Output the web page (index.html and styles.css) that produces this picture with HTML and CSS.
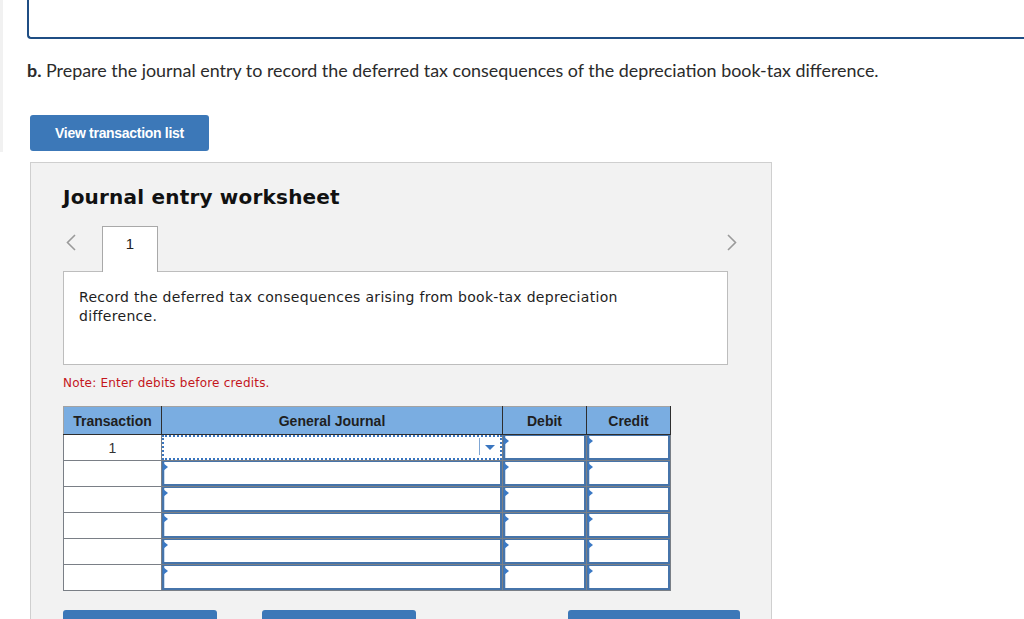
FILE: index.html
```html
<!doctype html>

<html lang="en">

<head>
  <meta charset="utf-8">
  <title>Journal entry worksheet</title>
  <link rel="stylesheet" href="styles.css">
</head>

<body>

  <div class="page-top">
    <div class="prev-part"></div>

    <p class="question"><b>b.</b> Prepare the journal entry to record the deferred tax consequences of the depreciation book-tax difference.</p>

    <button class="btn btn-list">View transaction list</button>
  </div>

  <section class="worksheet">
    <h2 class="ws-title">Journal entry worksheet</h2>

    <div class="tabs">
      <span class="nav">
        <svg width="10" height="17" viewBox="0 0 10 17"><polyline points="9,1 1.5,8.5 9,16" fill="none" stroke="#9a9a9a" stroke-width="1.6"/></svg>
      </span>
      <div class="tab">1</div>
      <span class="spacer"></span>
      <span class="nav nav-next">
        <svg width="10" height="17" viewBox="0 0 10 17"><polyline points="1,1 8.5,8.5 1,16" fill="none" stroke="#9a9a9a" stroke-width="1.6"/></svg>
      </span>
    </div>

    <div class="entry-box">
      <p>Record the deferred tax consequences arising from book-tax depreciation difference.</p>
    </div>

    <p class="note">Note: Enter debits before credits.</p>

    <table class="journal">
      <thead>
        <tr>
          <th class="col-tr">Transaction</th>
          <th class="col-gj">General Journal</th>
          <th class="col-amt">Debit</th>
          <th class="col-amt">Credit</th>
        </tr>
      </thead>
      <tbody>
        <tr>
          <td class="tr-num">1</td>
          <td><div class="field field-select"><span class="caret"></span></div></td>
          <td><div class="field"></div></td>
          <td><div class="field"></div></td>
        </tr>
        <tr>
          <td></td>
          <td><div class="field"></div></td>
          <td><div class="field"></div></td>
          <td><div class="field"></div></td>
        </tr>
        <tr>
          <td></td>
          <td><div class="field"></div></td>
          <td><div class="field"></div></td>
          <td><div class="field"></div></td>
        </tr>
        <tr>
          <td></td>
          <td><div class="field"></div></td>
          <td><div class="field"></div></td>
          <td><div class="field"></div></td>
        </tr>
        <tr>
          <td></td>
          <td><div class="field"></div></td>
          <td><div class="field"></div></td>
          <td><div class="field"></div></td>
        </tr>
        <tr>
          <td></td>
          <td><div class="field"></div></td>
          <td><div class="field"></div></td>
          <td><div class="field"></div></td>
        </tr>
      </tbody>
    </table>

    <div class="actions">
      <button class="btn btn-record" aria-label="Record entry"></button>
      <button class="btn btn-clear" aria-label="Clear entry"></button>
      <span class="spacer"></span>
      <button class="btn btn-view" aria-label="View general journal"></button>
    </div>
  </section>

</body>

</html>
```

FILE: styles.css
```css
html,
body {
  margin: 0;
  height: 100%;
  overflow: hidden;
  background: #fff;
}

body {
  color: #2b2b2b;
}

.page-top {
  border-left: 3px solid #f1f1f1;
  height: 152px;
  padding-left: 24px;
}

.prev-part {
  height: 37px;
  margin-right: -10px;
  border-left: 2px solid #1f4e84;
  border-bottom: 2px solid #1f4e84;
  border-bottom-left-radius: 4px;
}

.question {
  margin: 21px 0 0;
  font-family: Lato, "Open Sans", sans-serif;
  font-size: 17.9px;
  line-height: 20px;
}

.question b {
  font-weight: 700;
}

.btn {
  border: none;
  border-radius: 3px;
  background-color: #3c78b8;
  color: #fff;
  font-family: "Liberation Sans", Arial, sans-serif;
  font-weight: bold;
  font-size: 14px;
  letter-spacing: -0.3px;
  cursor: pointer;
}

.btn-list {
  display: block;
  margin: 35px 0 0 3px;
  width: 179px;
  height: 36px;
  padding: 0;
}

.worksheet {
  margin: 10px 0 0 30px;
  width: 665px;
  padding: 22px 43px 0 32px;
  min-height: 500px;
  background-color: #f2f2f2;
  border: 1px solid #cfcfcf;
}

.ws-title {
  margin: 0;
  font-family: "DejaVu Sans", Verdana, sans-serif;
  font-size: 20px;
  letter-spacing: 0.2px;
  line-height: 24px;
  font-weight: bold;
  color: #111;
}

.tabs {
  display: flex;
  align-items: flex-start;
  margin-top: 17px;
}

.tabs .spacer {
  flex: 1;
}

.nav {
  width: 39px;
  padding: 8px 0 0 3px;
  box-sizing: border-box;
}

.nav-next {
  width: 10px;
  padding-left: 0;
  margin-right: -9px;
}

.tab {
  position: relative;
  z-index: 1;
  width: 56px;
  height: 46px;
  box-sizing: border-box;
  margin-bottom: -1px;
  padding-top: 8px;
  background: #fff;
  border: 1px solid #a9a9a9;
  border-bottom: none;
  text-align: center;
  font-family: "Liberation Sans", Arial, sans-serif;
  font-size: 15px;
  color: #222;
}

.entry-box {
  height: 94px;
  box-sizing: border-box;
  background: #fff;
  border: 1px solid #bdbdbd;
  padding: 16px 15px 0;
}

.entry-box p {
  margin: 0;
  max-width: 590px;
  font-family: "DejaVu Sans", Verdana, sans-serif;
  font-size: 14px;
  letter-spacing: 0.3px;
  line-height: 19px;
  color: #1e1e1e;
}

.note {
  margin: 11px 0 0;
  font-family: "DejaVu Sans", Verdana, sans-serif;
  font-size: 12px;
  letter-spacing: 0.2px;
  line-height: 15px;
  color: #c4161c;
}

.journal {
  margin-top: 15px;
  width: 607px;
  border-collapse: collapse;
  table-layout: fixed;
  font-family: "Liberation Sans", Arial, sans-serif;
}

.journal th {
  height: 27px;
  padding: 0;
  background-color: #7aade1;
  border: 1px solid #2e2e2e;
  border-top-color: #a3a3a3;
  font-size: 14px;
  font-weight: bold;
  color: #1f1f1f;
}

.journal th:first-child {
  border-left-color: #a3a3a3;
}

.col-tr {
  width: 97px;
}

.col-gj {
  width: 340px;
}

.col-amt {
  width: 83px;
}

.journal td {
  height: 25px;
  padding: 0;
  background: #fff;
  border: 1px solid #7a7f86;
  vertical-align: top;
}

.journal td.tr-num {
  vertical-align: middle;
  text-align: center;
  font-size: 14px;
  color: #333;
}

.field {
  position: relative;
  height: 25px;
  box-sizing: border-box;
  border: 2px solid #4674aa;
  border-top-width: 1px;
  box-shadow: inset 1px 0 0 #c9dbef;
}

/* small blue marker in the corner of every input cell */
.field::before {
  content: "";
  position: absolute;
  top: 1px;
  left: -1px;
  border-left: 5px solid #3b79c4;
  border-top: 4px solid transparent;
  border-bottom: 4px solid transparent;
}

.field-select {
  border: 2px dotted #3a76c0;
  box-shadow: none;
}

.field-select::before {
  display: none;
}

.field-select::after {
  content: "";
  position: absolute;
  top: 1px;
  bottom: 3px;
  right: 20px;
  border-left: 1px solid #7fa6d4;
}

.caret {
  position: absolute;
  top: 8px;
  right: 5px;
  border-top: 5px solid #3a76c0;
  border-left: 5px solid transparent;
  border-right: 5px solid transparent;
}

.actions {
  display: flex;
  margin-top: 19px;
  width: 677px;
}

.actions .spacer {
  flex: 1;
}

.actions .btn {
  height: 36px;
  padding: 0;
}

.btn-record,
.btn-clear {
  width: 154px;
}

.btn-clear {
  margin-left: 45px;
}

.btn-view {
  width: 172px;
}
```
